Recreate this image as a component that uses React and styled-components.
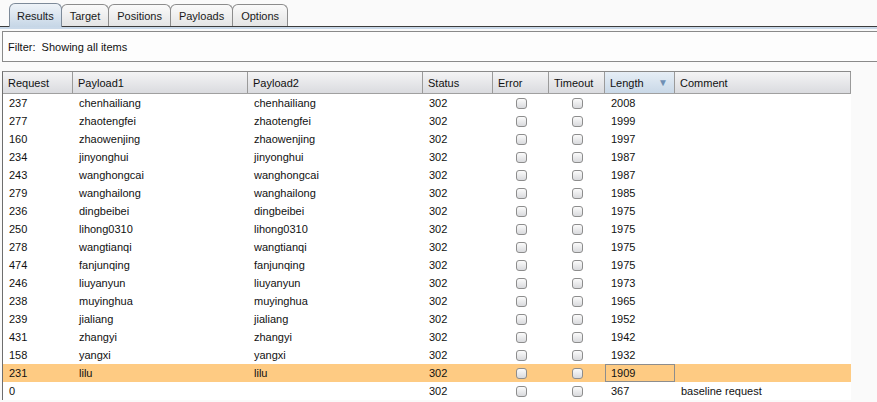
import React from "react";
import styled, { createGlobalStyle, css } from "styled-components";

const GlobalStyle = createGlobalStyle`
  body {
    margin: 0;
    background: #fafafa;
    font-family: "Liberation Sans", Arial, sans-serif;
    font-size: 11px;
    color: #111;
  }
`;

const columns = [
  { key: "request", label: "Request", width: 70 },
  { key: "p1", label: "Payload1", width: 175 },
  { key: "p2", label: "Payload2", width: 175 },
  { key: "status", label: "Status", width: 70 },
  { key: "error", label: "Error", width: 56 },
  { key: "timeout", label: "Timeout", width: 56 },
  { key: "length", label: "Length", width: 70, sorted: true },
  { key: "comment", label: "Comment", width: 176 },
];

const gridCols = columns.map((c) => `${c.width}px`).join(" ");

const rows = [
  ["237", "chenhailiang", "2008"],
  ["277", "zhaotengfei", "1999"],
  ["160", "zhaowenjing", "1997"],
  ["234", "jinyonghui", "1987"],
  ["243", "wanghongcai", "1987"],
  ["279", "wanghailong", "1985"],
  ["236", "dingbeibei", "1975"],
  ["250", "lihong0310", "1975"],
  ["278", "wangtianqi", "1975"],
  ["474", "fanjunqing", "1975"],
  ["246", "liuyanyun", "1973"],
  ["238", "muyinghua", "1965"],
  ["239", "jialiang", "1952"],
  ["431", "zhangyi", "1942"],
  ["158", "yangxi", "1932"],
  ["231", "lilu", "1909", true],
];

const tabs = ["Results", "Target", "Positions", "Payloads", "Options"];

const TabStrip = styled.div`
  display: flex;
  align-items: flex-end;
  height: 26px;
  padding-left: 9px;
  border-bottom: 1px solid #3c3c3c;
  box-shadow: 0 2px 0 #c9d8e8;
`;

const Tab = styled.div`
  height: 21px;
  padding: 0 8px;
  margin-right: -1px;
  display: flex;
  align-items: center;
  border: 1px solid #8c8c8c;
  border-bottom: none;
  border-radius: 6px 6px 0 0;
  background: linear-gradient(#fafafa, #e4e4e4);
  font-size: 11px;
  color: #1a1a1a;
  ${(p) =>
    p.$active &&
    css`
      height: 23px;
      padding: 0 7px;
      background: linear-gradient(#eef3f8, #c6d6e6);
      position: relative;
      z-index: 1;
      margin-bottom: -1px;
      border-color: #7d8a99;
    `}
`;

const FilterBar = styled.div`
  margin: 4px 0 0 2px;
  height: 29px;
  display: flex;
  align-items: center;
  padding-left: 5px;
  border: 1px solid #8a8a8a;
  border-right: none;
  background: #fdfdfd;
  font-size: 11px;
`;

const Table = styled.div`
  margin: 9px 0 0 2px;
  width: 848px;
  border-left: 1px solid #6e6e6e;
  border-top: 1px solid #8a8a8a;
  background: #fff;
`;

const HeaderRow = styled.div`
  display: grid;
  grid-template-columns: ${gridCols};
  height: 21px;
  border-bottom: 1px solid #a0a0a0;
`;

const HeaderCell = styled.div`
  display: flex;
  align-items: center;
  justify-content: space-between;
  padding: 0 6px 0 5px;
  border-right: 1px solid #9a9a9a;
  background: ${(p) =>
    p.$sorted
      ? "linear-gradient(#e6eef6, #c9d8e7)"
      : "linear-gradient(#f4f4f5, #dadbdf)"};
`;

const SortArrow = styled.span`
  color: #6f8fb4;
  font-size: 10px;
`;

const Row = styled.div`
  display: grid;
  grid-template-columns: ${gridCols};
  height: 18px;
  background: ${(p) => (p.$selected ? "#fecb83" : "#fff")};
`;

const Cell = styled.div`
  display: flex;
  align-items: center;
  padding-left: 6px;
  justify-content: ${(p) => (p.$center ? "center" : "flex-start")};
  ${(p) =>
    p.$center &&
    css`
      padding-left: 0;
    `}
  ${(p) =>
    p.$focused &&
    css`
      border: 1px solid #8d8d8d;
      padding-left: 5px;
    `}
`;

const Check = styled.span`
  width: 11px;
  height: 11px;
  border: 1px solid #8d8d8d;
  border-radius: 3px;
  background: linear-gradient(#fbfbfb, #d9dadd);
  box-sizing: border-box;
`;

function DataRow({ request, p1, p2, status, length, comment, selected }) {
  return (
    <Row $selected={selected}>
      <Cell>{request}</Cell>
      <Cell>{p1}</Cell>
      <Cell>{p2}</Cell>
      <Cell>{status}</Cell>
      <Cell $center>
        <Check />
      </Cell>
      <Cell $center>
        <Check />
      </Cell>
      <Cell $focused={selected}>{length}</Cell>
      <Cell>{comment}</Cell>
    </Row>
  );
}

export default function App() {
  return (
    <>
      <GlobalStyle />
      <TabStrip>
        {tabs.map((t, i) => (
          <Tab key={t} $active={i === 0}>
            {t}
          </Tab>
        ))}
      </TabStrip>
      <FilterBar>Filter:&nbsp; Showing all items</FilterBar>
      <Table>
        <HeaderRow>
          {columns.map((c) => (
            <HeaderCell key={c.key} $sorted={c.sorted}>
              {c.label}
              {c.sorted && <SortArrow>▼</SortArrow>}
            </HeaderCell>
          ))}
        </HeaderRow>
        {rows.map(([req, name, len, sel]) => (
          <DataRow
            key={req}
            request={req}
            p1={name}
            p2={name}
            status="302"
            length={len}
            selected={sel}
          />
        ))}
        <DataRow request="0" status="302" length="367" comment="baseline request" />
      </Table>
    </>
  );
}
